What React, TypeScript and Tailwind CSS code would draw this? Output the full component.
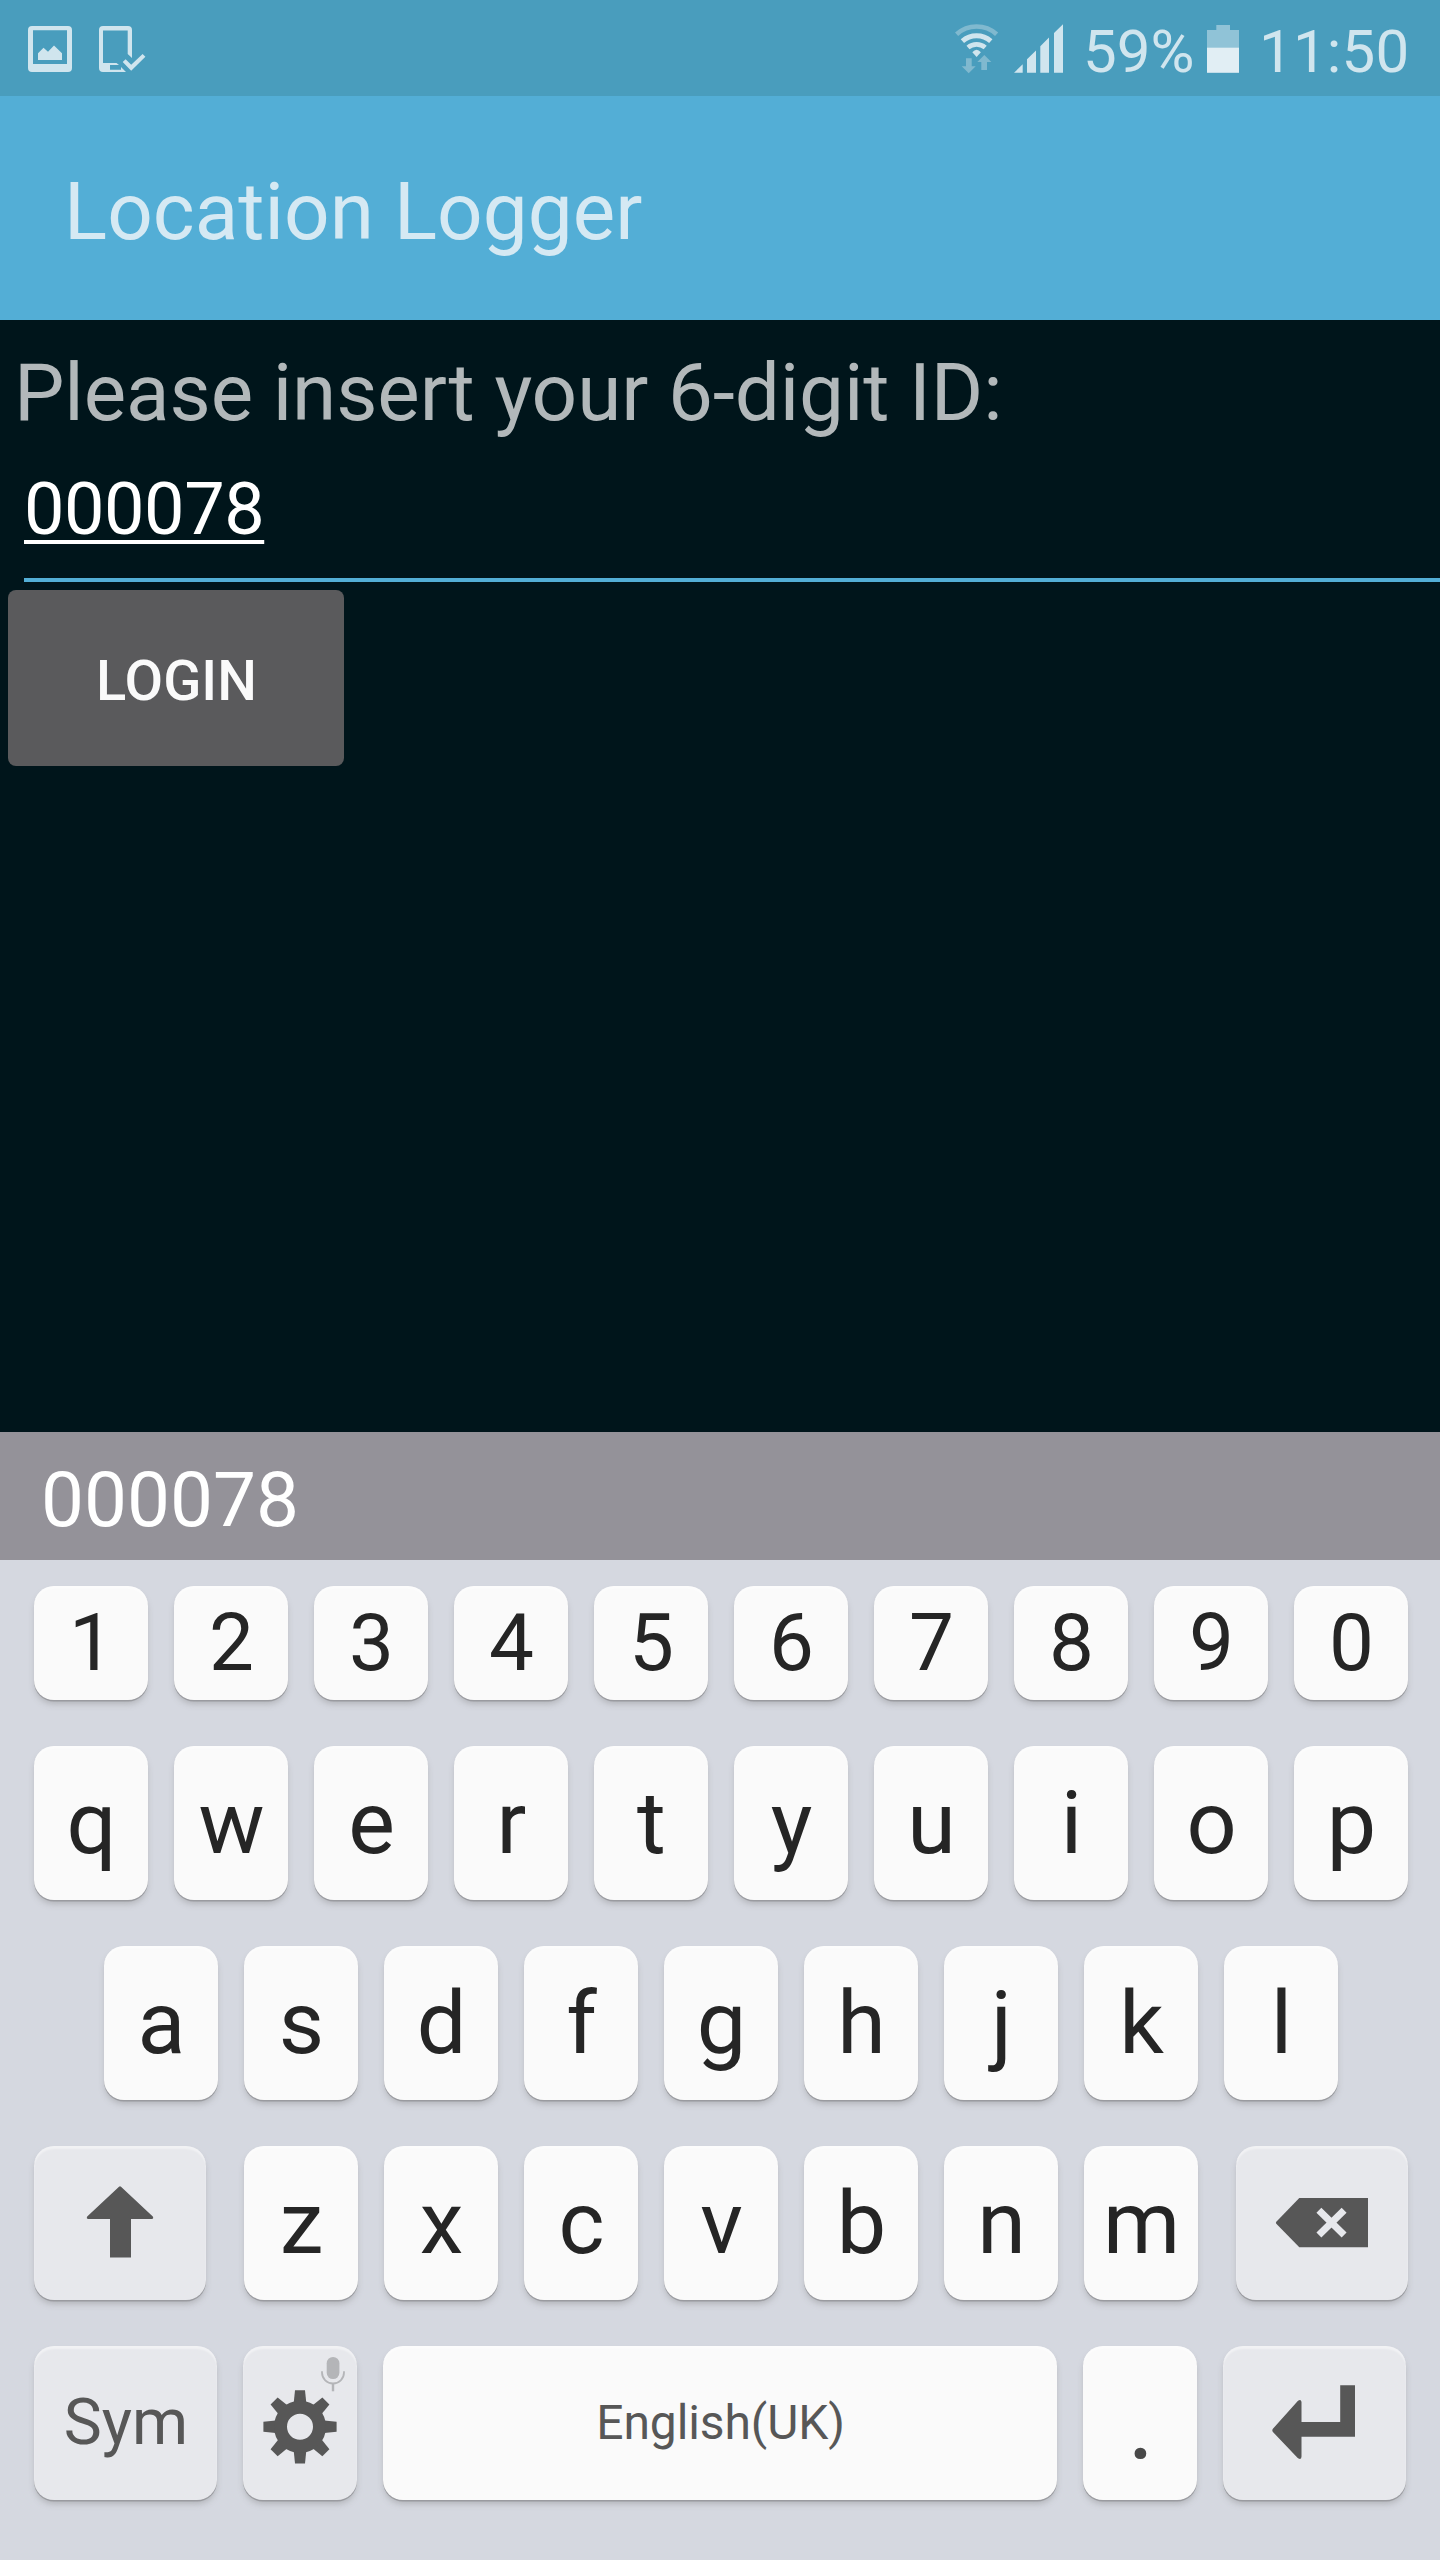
import type { ReactNode } from "react";

function GalleryIcon() {
  return (
    <svg viewBox="28 0 44 96" className="h-24 w-11" fill="#d0e5ee">
      <path
        fillRule="evenodd"
        d="M32 26H68a4 4 0 0 1 4 4V68a4 4 0 0 1-4 4H32a4 4 0 0 1-4-4V30a4 4 0 0 1 4-4ZM33 30.3V64H67V30.3Z"
      />
      <path d="M38 60V53.2L43.5 47.7L48 51.8L54 45.5L62 53.2V60Z" />
    </svg>
  );
}

function DeviceCheckIcon() {
  return (
    <svg viewBox="98 0 48 96" className="h-24 w-12" fill="#d0e5ee">
      <path d="M103 26H128a4 4 0 0 1 4 4V58L127.7 54V30.5H103V63H116.5L119 65H110V69.7H121V67L126 72H103a4 4 0 0 1-4-4V30a4 4 0 0 1 4-4Z" />
      <path d="M122.7 62L125.6 59.3L131.2 64.7L142.6 54L145.4 56.7L131.2 70.7Z" />
    </svg>
  );
}

function WifiIcon() {
  return (
    <svg viewBox="955 0 44 96" className="h-24 w-11" fill="none">
      <path d="M956.6 34.2A29.8 29.8 0 0 1 996.6 34.2" stroke="#80b9cf" strokeWidth="4.7" />
      <path d="M962.4 41.1A21.5 21.5 0 0 1 990.8 41.1" stroke="#d0e5ee" strokeWidth="5" />
      <path d="M968 47.5A13.3 13.3 0 0 1 985.2 47.5" stroke="#d0e5ee" strokeWidth="4.7" />
      <path d="M976.6 57L972.3 52.3Q976.6 47.3 980.9 52.3Z" fill="#d0e5ee" />
      <path
        d="M966 58.3H971.7V66.3H975.7L968.7 73.3L961.7 66.3H966ZM984.3 55L991.3 62H987V70H981.3V62H977.3Z"
        fill="#80b9cf"
      />
    </svg>
  );
}

function SignalIcon() {
  return (
    <svg viewBox="1014 0 50 96" className="ml-[15px] h-24 w-[50px]" fill="#d0e5ee">
      <path d="M1014 72.8L1022.7 64.3V72.8ZM1027 72.8V59.3L1036 50.6V72.8ZM1040.3 72.8V46.3L1049 37.6V72.8ZM1054 72.8V33L1063 24.2V72.8Z" />
    </svg>
  );
}

function BatteryIcon() {
  return (
    <svg viewBox="1207 0 32 96" className="h-24 w-8">
      <path d="M1207 48V30H1216.3V25H1230V30H1239V48Z" fill="#90c3d7" />
      <path d="M1207 47.7H1239V72.8H1207Z" fill="#e1eef4" />
    </svg>
  );
}

function ShiftIcon() {
  return (
    <svg viewBox="34 2146 172 154" className="h-full w-full" fill="#575757">
      <path d="M119 2186.8Q120 2185.7 121 2186.8L152.8 2216.6Q154 2219 151.8 2219H131V2257.5H110V2219H88.3Q86 2219 87.2 2216.6Z" />
    </svg>
  );
}

function BackspaceIcon() {
  return (
    <svg viewBox="1236 2146 172 154" className="h-full w-full">
      <path d="M1276.3 2221.7L1299.3 2198H1368V2247.3H1299.3L1276.3 2223.7Q1275.5 2222.7 1276.3 2221.7Z" fill="#575757" />
      <path d="M1318.9 2210.2L1344.1 2235M1344.1 2210.2L1318.9 2235" stroke="#e7e8ec" strokeWidth="7" />
    </svg>
  );
}

function EnterIcon() {
  return (
    <svg viewBox="1223 2346 183 154" className="h-full w-full" fill="#575757">
      <path d="M1272.7 2429Q1271.8 2430.3 1272.7 2431.8L1297.7 2458Q1301.5 2460.5 1301.5 2456.5V2436.7H1355V2385.3H1340.2V2422H1301.5V2402Q1301 2398.8 1298 2400.8Z" />
    </svg>
  );
}

const TEETH = [0, 45, 90, 135, 180, 225, 270, 315];

function SettingsIcon() {
  return (
    <svg viewBox="243 2346 114 154" className="h-full w-full">
      <g fill="#575757">
        {TEETH.map((angle) => (
          <path
            key={angle}
            transform={`rotate(${angle} 300 2426.8)`}
            d="M295 2390.2H305L306.5 2405H293.5Z"
          />
        ))}
      </g>
      <circle cx="300" cy="2426.8" r="19.5" fill="none" stroke="#575757" strokeWidth="13" />
      <g fill="#b4b5b8">
        <rect x="326.7" y="2357" width="12.7" height="22" rx="6.3" />
        <rect x="331.8" y="2383" width="2.4" height="8.3" />
      </g>
      <path d="M322 2371.3V2372.5A11 11 0 0 0 344 2372.5V2371.3" fill="none" stroke="#b4b5b8" strokeWidth="1.8" />
    </svg>
  );
}

function Key({ children, size, dim = false }: { children?: ReactNode; size: string; dim?: boolean }) {
  return (
    <button
      className={`flex h-full shrink-0 items-center justify-center rounded-[20px] shadow-[0_1.5px_0.5px_#9a9ba0,0_5px_6px_-1px_rgba(120,120,120,0.38),inset_0_3px_2px_rgba(255,255,255,0.45)] ${
        dim ? "bg-[#e7e8ec] text-[#575757]" : "bg-[#fafafa] text-[#252525]"
      } ${size}`}
    >
      {children}
    </button>
  );
}

function LetterRow({ keys, className }: { keys: string; className: string }) {
  return (
    <div className={`flex gap-[26px] ${className}`}>
      {keys.split("").map((k) => (
        <Key key={k} size="w-[114px]">
          <span className="pl-px">{k}</span>
        </Key>
      ))}
    </div>
  );
}

export default function App() {
  return (
    <div className="flex h-[2560px] w-[1440px] flex-col overflow-hidden bg-[#00151b] font-['Roboto',sans-serif]">
      <div className="flex h-24 shrink-0 items-start justify-between bg-[#499dbd] pl-7 text-[60px] leading-[103px] text-[#d0e5ee]">
        <div className="flex gap-[26px]">
          <GalleryIcon />
          <DeviceCheckIcon />
        </div>
        <div className="flex w-[485px]">
          <WifiIcon />
          <SignalIcon />
          <span className="ml-[19px] w-[124px] whitespace-nowrap">59%</span>
          <BatteryIcon />
          <span className="ml-5 whitespace-nowrap tracking-[0.2px]">11:50</span>
        </div>
      </div>

      <header className="h-56 shrink-0 bg-[#53aed6] pl-16">
        <h1 className="text-[80px] leading-[233px] tracking-[0.06px] text-[#d5e9f3]">Location Logger</h1>
      </header>

      <main className="flex h-[1112px] shrink-0 flex-col items-start">
        <label className="pt-[26px] pl-[14px] text-[80px] leading-[94px] tracking-[-0.1px] text-[#b2b8ba]">
          Please insert your 6-digit ID:
        </label>
        <div className="ml-6 h-[142px] w-[1416px] border-b-4 border-[#53aed6] pt-7 text-[72px] leading-[84px] text-white">
          <span className="tracking-[-0.43px] underline decoration-4 underline-offset-[6px] [text-decoration-skip-ink:none]">
            000078
          </span>
        </div>
        <button className="mt-2 ml-2 flex h-44 w-[336px] items-center justify-center rounded-lg bg-[#5a5a5c] text-[56px] font-medium text-[#fafafa]">
          <span className="pt-1.5 pl-px">LOGIN</span>
        </button>
      </main>

      <div className="h-32 shrink-0 bg-[#949299] pl-[41px] text-[76.5px] leading-[137px] text-white">000078</div>

      <section className="flex grow flex-col gap-[46px] bg-[#d5d8e0] pt-[26px] text-[88px] leading-none">
        <LetterRow keys="1234567890" className="h-[114px] pl-[34px] text-[80px]" />
        <LetterRow keys="qwertyuiop" className="h-[154px] pl-[34px]" />
        <LetterRow keys="asdfghjkl" className="h-[154px] pl-[104px]" />
        <div className="flex h-[154px] gap-[38px] pl-[34px]">
          <Key size="w-[172px]" dim>
            <ShiftIcon />
          </Key>
          <LetterRow keys="zxcvbnm" className="h-full" />
          <Key size="w-[172px]" dim>
            <BackspaceIcon />
          </Key>
        </div>
        <div className="flex h-[154px] gap-[26px] pl-[34px]">
          <Key size="w-[183px]" dim>
            <span className="pl-px text-[64px]">Sym</span>
          </Key>
          <Key size="w-[114px]" dim>
            <SettingsIcon />
          </Key>
          <Key size="w-[674px]">
            <span className="pl-px text-[48px] tracking-[-0.1px] text-[#575757]">English(UK)</span>
          </Key>
          <Key size="w-[114px]">
            <span className="pl-0.5 text-[104px] text-[#484848]">.</span>
          </Key>
          <Key size="w-[183px]" dim>
            <EnterIcon />
          </Key>
        </div>
      </section>
    </div>
  );
}
